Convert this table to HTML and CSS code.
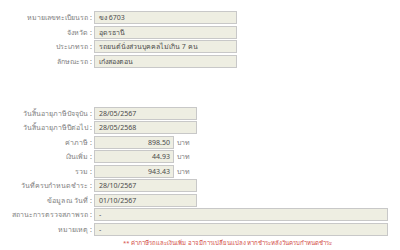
FILE: index.html
```html
<!DOCTYPE html>
<html lang="th">
<head>
<meta charset="utf-8">
<link rel="stylesheet" href="styles.css">
</head>
<body>
<div class="page">
  <div class="form group-top">
    <div class="label">หมายเลขทะเบียนรถ :</div>
    <div class="field"><span class="box w-mid">ขง 6703</span></div>
    <div class="label">จังหวัด :</div>
    <div class="field"><span class="box w-mid">อุดรธานี</span></div>
    <div class="label">ประเภทรถ :</div>
    <div class="field"><span class="box w-mid">รถยนต์นั่งส่วนบุคคลไม่เกิน 7 คน</span></div>
    <div class="label">ลักษณะรถ :</div>
    <div class="field"><span class="box w-mid">เก๋งสองตอน</span></div>
  </div>

  <div class="form group-bottom">
    <div class="label">วันสิ้นอายุภาษีปัจจุบัน :</div>
    <div class="field"><span class="box w-date">28/05/2567</span></div>
    <div class="label">วันสิ้นอายุภาษีปีต่อไป :</div>
    <div class="field"><span class="box w-date">28/05/2568</span></div>
    <div class="label">ค่าภาษี :</div>
    <div class="field"><span class="box w-num">898.50</span><span class="unit">บาท</span></div>
    <div class="label">เงินเพิ่ม :</div>
    <div class="field"><span class="box w-num">44.93</span><span class="unit">บาท</span></div>
    <div class="label">รวม :</div>
    <div class="field"><span class="box w-num">943.43</span><span class="unit">บาท</span></div>
    <div class="label">วันที่ครบกำหนดชำระ :</div>
    <div class="field"><span class="box w-date">28/10/2567</span></div>
    <div class="label">ข้อมูล ณ วันที่ :</div>
    <div class="field"><span class="box w-date">01/10/2567</span></div>
    <div class="label">สถานะการตรวจสภาพรถ :</div>
    <div class="field"><span class="box w-long">-</span></div>
    <div class="label">หมายเหตุ :</div>
    <div class="field"><span class="box w-long">-</span></div>
  </div>

  <p class="note">** ค่าภาษีรถและเงินเพิ่ม อาจมีการเปลี่ยนแปลง หากชำระหลังวันครบกำหนดชำระ</p>
</div>
</body>
</html>
```

FILE: styles.css
```css
html, body {
  margin: 0;
  padding: 0;
  background: #ffffff;
}

body {
  font-family: Tahoma, "Noto Sans", "DejaVu Sans", sans-serif;
  font-size: 7px;
  color: #555555;
}

.page {
  padding-top: 11px;
}

.form {
  display: grid;
  grid-template-columns: 92px auto;
  column-gap: 2px;
  row-gap: 1.5px;
  grid-auto-rows: 13px;
}

.group-bottom {
  margin-top: 39px;
}

.label {
  text-align: right;
  color: #808080;
  line-height: 13px;
  white-space: nowrap;
}

.field {
  display: flex;
  align-items: center;
  gap: 3px;
}

.box {
  box-sizing: border-box;
  height: 13px;
  line-height: 11px;
  padding: 0 4px;
  background: #eeeee2;
  border: 1px solid #c8c8c8;
  color: #4a4a4a;
  white-space: nowrap;
  overflow: hidden;
}

.w-mid { width: 143px; }
.w-date { width: 103px; }
.w-num { width: 80px; text-align: right; padding-right: 3px; }
.w-long { width: 294px; }

.unit {
  color: #808080;
}

.note {
  margin: 3px 0 0 123px;
  color: #d24a43;
  font-size: 6px;
  line-height: 8px;
  white-space: nowrap;
}
```
